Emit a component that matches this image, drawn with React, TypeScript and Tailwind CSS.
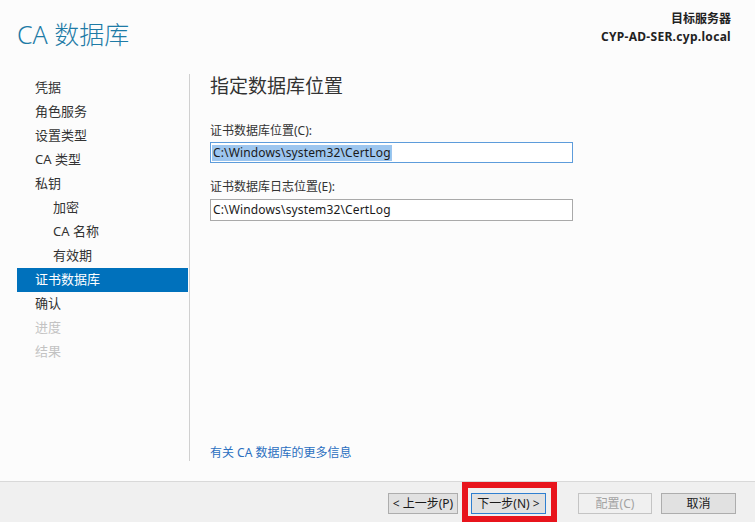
import React from "react";

type NavItem = { label: string; sub?: boolean; active?: boolean; disabled?: boolean };

const steps: NavItem[] = [
  { label: "凭据" },
  { label: "角色服务" },
  { label: "设置类型" },
  { label: "CA 类型" },
  { label: "私钥" },
  { label: "加密", sub: true },
  { label: "CA 名称", sub: true },
  { label: "有效期", sub: true },
  { label: "证书数据库", active: true },
  { label: "确认" },
  { label: "进度", disabled: true },
  { label: "结果", disabled: true },
];

function Btn({ children, w, variant }: { children: React.ReactNode; w: string; variant?: "focus" | "disabled" }) {
  const base = "h-[21px] flex items-center justify-center text-[12px] leading-none border";
  const look =
    variant === "focus"
      ? "bg-[#e1e1e1] border-[#2f7fd0] text-[#1a1a1a]"
      : variant === "disabled"
      ? "bg-[#f0f0f0] border-[#c4c4c4] text-[#a3a3a3]"
      : "bg-[#e1e1e1] border-[#adadad] text-[#1a1a1a]";
  return <div className={`${base} ${look} ${w}`}>{children}</div>;
}

export default function App() {
  return (
    <div className="w-[755px] h-[522px] flex flex-col bg-[#fcfcfc] overflow-hidden font-['Noto_Sans','Noto_Sans_CJK_SC',sans-serif] text-[#333]">
      {/* header */}
      <div className="h-[74px] flex justify-between shrink-0">
        <div className="pl-[17px] pt-[20px] text-[25px] leading-[28px] text-[#1e7ba6] font-light">CA 数据库</div>
        <div className="pr-[24px] pt-[10px] text-right text-[12px] leading-[18px] font-bold text-[#222]">
          <div>目标服务器</div>
          <div className="tracking-[0.3px]">CYP-AD-SER.cyp.local</div>
        </div>
      </div>

      {/* body */}
      <div className="flex-1 flex pb-[20px] min-h-0">
        <div className="w-[189px] pl-[17px] pr-[1px] pt-[2px] shrink-0">
          {steps.map((s) => (
            <div
              key={s.label}
              className={`h-[24px] flex items-center text-[13px] ${s.sub ? "pl-[36px]" : "pl-[18px]"} ${
                s.active ? "bg-[#0071bc] text-white" : s.disabled ? "text-[#c3c3c3]" : "text-[#333]"
              }`}
            >
              {s.label}
            </div>
          ))}
        </div>

        <div className="flex-1 flex flex-col border-l border-[#d0d0d0] pl-[20px]">
          <div className="text-[19px] leading-[24px] text-[#333]">指定数据库位置</div>

          <div className="mt-[25px] text-[12px] leading-[16px]">证书数据库位置(C):</div>
          <div className="mt-[3px] w-[363px] h-[21px] border border-[#5d9cdb] bg-white flex items-center px-[1px] text-[12px] tracking-[0.15px]">
            <span className="bg-[#9dc6ef] text-[#1a1a1a] px-[1px] leading-[16px]">C:\Windows\system32\CertLog</span>
          </div>

          <div className="mt-[16px] text-[12px] leading-[16px]">证书数据库日志位置(E):</div>
          <div className="mt-[4px] w-[363px] h-[22px] border border-[#a9a9a9] bg-white flex items-center px-[2px] text-[12px] tracking-[0.15px] text-[#1a1a1a]">
            C:\Windows\system32\CertLog
          </div>

          <div className="mt-auto text-[12px] leading-[16px] text-[#2a6fc0]">有关 CA 数据库的更多信息</div>
        </div>
      </div>

      {/* footer */}
      <div className="h-[41px] shrink-0 border-t border-[#d9d9d9] bg-[#f0f0f0] flex justify-end items-start pt-[11px] pr-[19px]">
        <Btn w="w-[70px]">&lt; 上一步(P)</Btn>
        <div className="relative ml-[13px]">
          <Btn w="w-[75px]" variant="focus">下一步(N) &gt;</Btn>
          <div className="absolute left-[-9px] top-[-11px] w-[95px] h-[40px] border-[6px] border-[#e8141c]" />
        </div>
        <div className="ml-[32px]">
          <Btn w="w-[74px]" variant="disabled">配置(C)</Btn>
        </div>
        <div className="ml-[9px]">
          <Btn w="w-[75px]">取消</Btn>
        </div>
      </div>
    </div>
  );
}
